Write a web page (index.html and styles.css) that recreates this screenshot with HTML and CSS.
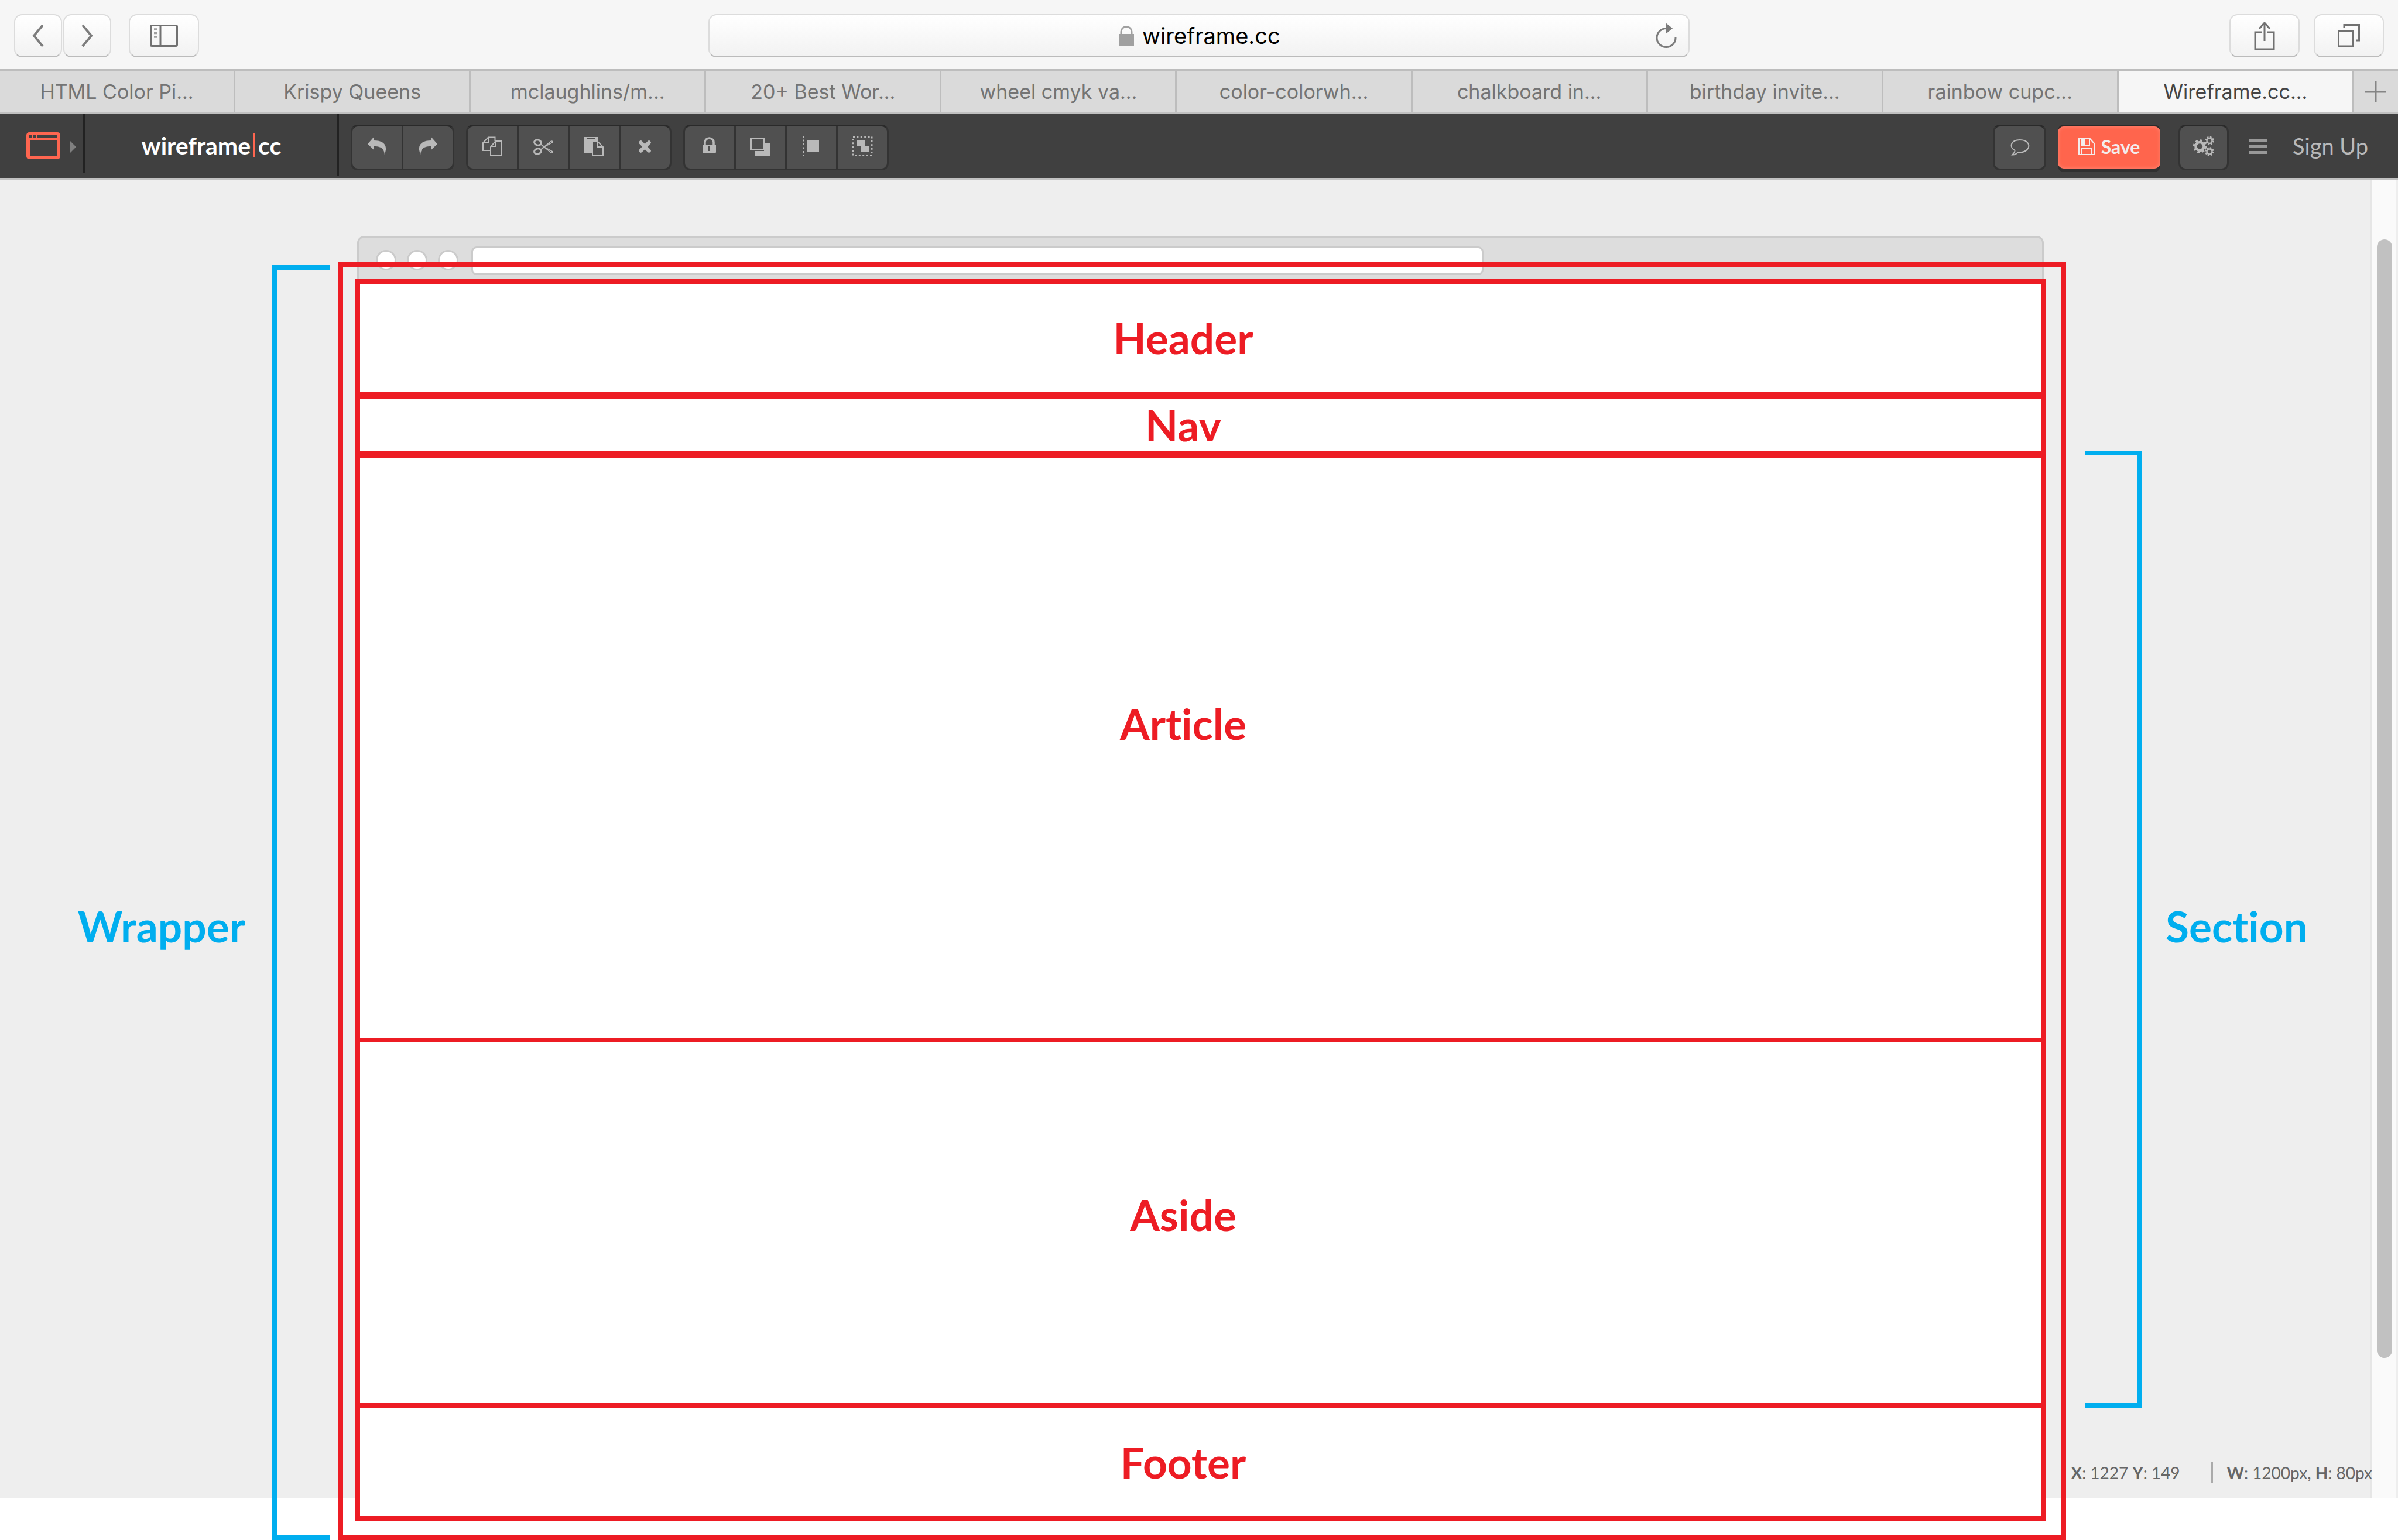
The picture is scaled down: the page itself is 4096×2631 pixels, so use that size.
FILE: index.html
```html
<!DOCTYPE html>
<html lang="en">
<head>
<meta charset="utf-8">
<title>Wireframe.cc</title>
<link rel="stylesheet" href="styles.css">
</head>
<body>
<svg class="sprite" aria-hidden="true">
  <symbol id="undo" viewBox="0 0 36 36"><path fill="currentColor" d="M2 14 12.500 2V8C26 8 34 13 33 24L31 33C30 22 26 18 12.500 18V24Z"/></symbol>
</svg>

<header class="browser">
  <div class="history">
    <button class="chip chip-narrow" aria-label="Back"><svg width="20" height="40" viewBox="0 0 20 40"><path d="M18 2 3 20 18 38" fill="none" stroke="#7d7d7d" stroke-width="4"/></svg></button>
    <button class="chip chip-narrow" aria-label="Forward"><svg width="20" height="40" viewBox="0 0 20 40"><path d="M2 2 17 20 2 38" fill="none" stroke="#7d7d7d" stroke-width="4"/></svg></button>
    <button class="chip chip-wide" aria-label="Sidebar"><svg width="48" height="38" viewBox="0 0 48 38"><rect x="1.500" y="1.500" width="45" height="35" rx="2" fill="none" stroke="#717171" stroke-width="3"/><path d="M18 1V37" stroke="#717171" stroke-width="3"/><path d="M7 8h6M7 14.500h6M7 21h6" stroke="#a0a0a0" stroke-width="3.500"/></svg></button>
  </div>
  <div class="address">
    <div class="address-main">
      <svg width="26" height="34" viewBox="0 0 26 34"><path d="M4 15V10a9 8.500 0 0 1 18 0V15" fill="none" stroke="#a0a0a0" stroke-width="3"/><rect y="14" width="26" height="20" fill="#a0a0a0"/></svg>
      <input class="address-input" type="text" value="wireframe.cc" aria-label="Address">
    </div>
    <button class="reload" aria-label="Reload"><svg width="36" height="44" viewBox="0 0 36 44"><path d="M19 9.500A16 16 0 1 0 34 25" fill="none" stroke="#7c7c7c" stroke-width="3"/><path d="M17 0 29 9.500 17 19Z" fill="#7c7c7c"/></svg></button>
  </div>
  <div class="window-actions">
    <button class="chip chip-wide" aria-label="Share"><svg width="36" height="50" viewBox="0 0 36 50"><path d="M13 19H2V48H34V19H23M18 34V3M9 13 18 3 27 13" fill="none" stroke="#717171" stroke-width="3"/></svg></button>
    <button class="chip chip-wide" aria-label="Show all tabs"><svg width="38" height="40" viewBox="0 0 38 40"><path d="M1.500 12H26.500V38H1.500ZM11 7V1.500H36.500V28H31" fill="none" stroke="#717171" stroke-width="3"/></svg></button>
  </div>
</header>

<nav class="tabs" aria-label="Tabs">
  <a class="tab" href="#">HTML Color Pi...</a>
  <a class="tab" href="#">Krispy Queens</a>
  <a class="tab" href="#">mclaughlins/m...</a>
  <a class="tab" href="#">20+ Best Wor...</a>
  <a class="tab" href="#">wheel cmyk va...</a>
  <a class="tab" href="#">color-colorwh...</a>
  <a class="tab" href="#">chalkboard in...</a>
  <a class="tab" href="#">birthday invite...</a>
  <a class="tab" href="#">rainbow cupc...</a>
  <a class="tab tab-active" href="#">Wireframe.cc...</a>
  <button class="tab-new" aria-label="New tab"><svg width="36" height="36" viewBox="0 0 36 36"><path d="M18 0V36M0 18H36" stroke="#858585" stroke-width="3"/></svg></button>
</nav>

<div class="toolbar">
  <button class="stencil" aria-label="Choose stencil">
    <svg width="58" height="46" viewBox="0 0 58 46"><rect width="58" height="46" rx="5" fill="#ff6650"/><path d="M6 14H52V40H6ZM5 5h5v4H5ZM12 5h4v4h-4ZM18 5H53V9H18Z" fill="#404040"/></svg>
    <svg width="10" height="20" viewBox="0 0 10 20"><path d="M0 0 10 10 0 20Z" fill="#808080"/></svg>
  </button>
  <a class="brand" href="#">wireframe<span class="brand-bar"></span>cc</a>
  <div class="tools">
    <div class="group">
      <button class="tool" aria-label="Undo"><svg class="icon"><use href="#undo"/></svg></button>
      <button class="tool" aria-label="Redo"><svg class="icon icon-flip"><use href="#undo"/></svg></button>
    </div>
    <div class="group">
      <button class="tool" aria-label="Copy"><svg class="icon" viewBox="0 0 36 36" fill="none" stroke="currentColor" stroke-width="2"><path d="M14 25H2V12L11 2.500H22.500V9M2 12H11V2.500M15 19 23.500 9H34V33H15ZM15 18H23.500V9"/></svg></button>
      <button class="tool" aria-label="Cut"><svg class="icon" viewBox="0 0 36 36" fill="none" stroke="currentColor"><ellipse cx="8.500" cy="11.500" rx="6" ry="4.500" stroke-width="3" transform="rotate(15 8.500 11.500)"/><ellipse cx="8.500" cy="26.500" rx="6" ry="4.500" stroke-width="3" transform="rotate(-15 8.500 26.500)"/><path stroke-width="1.500" d="M14 15 31 28.500Q34 30 34 27L16 17M14 23 31 9.500Q34 8 34 11L16 21M14 14 20 19 14 24"/></svg></button>
      <button class="tool" aria-label="Paste"><svg class="icon" viewBox="0 0 36 36"><path fill="currentColor" d="M1 2H24V10H15V29H1Z"/><path d="M5.500 5H20" stroke="#505050" stroke-width="2"/><path fill="#505050" stroke="currentColor" stroke-width="2" d="M15 10H24L33 19V33H15ZM24 10V19H33"/></svg></button>
      <button class="tool" aria-label="Delete"><svg class="icon" viewBox="0 0 36 36"><path d="M10.500 11.500 24.500 25.500M24.500 11.500 10.500 25.500" stroke="currentColor" stroke-width="6.500" stroke-linecap="round"/></svg></button>
    </div>
    <div class="group">
      <button class="tool" aria-label="Lock"><svg class="icon" viewBox="0 0 36 36"><path d="M10 16V11a7.500 7 0 0 1 15 0V16" fill="none" stroke="currentColor" stroke-width="3.500"/><rect x="6" y="15" width="23" height="14" rx="1" fill="currentColor"/><path d="M17.500 18V26" stroke="#505050" stroke-width="3"/></svg></button>
      <button class="tool" aria-label="Bring to front"><svg class="icon" viewBox="0 0 36 36"><path d="M24 13H34V35H9V26H24Z" fill="currentColor"/><rect x="1.500" y="4.500" width="22" height="19" fill="none" stroke="currentColor" stroke-width="3"/></svg></button>
      <button class="tool" aria-label="Align"><svg class="icon" viewBox="0 0 36 36"><path d="M4.500 0V35" stroke="currentColor" stroke-width="3" stroke-dasharray="3 3.500"/><rect x="10" y="8" width="21" height="19" fill="currentColor"/></svg></button>
      <button class="tool" aria-label="Group"><svg class="icon" viewBox="0 0 36 36"><rect x="2" y="1.500" width="32" height="32" fill="none" stroke="currentColor" stroke-width="3" stroke-dasharray="3 3.400"/><path d="M9 8H23V17H29V27H16V18H9Z" fill="currentColor"/></svg></button>
    </div>
  </div>
  <div class="account">
    <button class="tool tool-single" aria-label="Comments"><svg class="icon" viewBox="0 0 36 36"><path d="M9.500 25C-1 19 3 7 18 7S36 17 31 23C27 28 20 28.500 15 28 12 31 8 33 5 32.500 8 30 9.500 28 9.500 25Z" fill="none" stroke="currentColor" stroke-width="2"/></svg></button>
    <button class="save"><svg width="28" height="29" viewBox="0 0 28 29"><path d="M1 1H20L27 9V28H1ZM5 28V18H23V28M5 1V12H19V1" fill="none" stroke="#f3ecec" stroke-width="2"/><path d="M5 2H11V11H5Z" fill="#f3ecec"/></svg>Save</button>
    <button class="tool tool-single tool-settings" aria-label="Settings"><svg class="icon" viewBox="0 0 36 36" fill="none" stroke="currentColor"><circle cx="11.500" cy="18" r="7" stroke-width="4.500"/><circle cx="11.500" cy="18" r="10" stroke-width="3.500" stroke-dasharray="4 3.850"/><circle cx="28" cy="8.500" r="4.500" stroke-width="2.500"/><circle cx="28" cy="8.500" r="6.500" stroke-width="2.500" stroke-dasharray="2.800 2.300"/><circle cx="28" cy="27" r="4.500" stroke-width="2.500"/><circle cx="28" cy="27" r="6.500" stroke-width="2.500" stroke-dasharray="2.800 2.300"/></svg></button>
    <button class="menu" aria-label="Menu"><svg width="31" height="28" viewBox="0 0 31 28"><path d="M0 3.500H31M0 14H31M0 24.500H31" stroke="#989898" stroke-width="5"/></svg></button>
    <a class="signup" href="#">Sign Up</a>
  </div>
</div>

<main class="workspace">
  <div class="backdrop"></div>
  <div class="scrollbar"><div class="thumb"></div></div>
  <div class="mock-browser">
    <span class="dot"></span><span class="dot"></span><span class="dot"></span>
    <div class="mock-address"></div>
  </div>
  <div class="label label-wrapper">Wrapper</div>
  <div class="bracket bracket-wrapper"></div>
  <div class="frame">
    <section class="box box-header">Header</section>
    <section class="box box-nav">Nav</section>
    <section class="box box-article">Article</section>
    <section class="box box-aside">Aside</section>
    <section class="box box-footer">Footer</section>
  </div>
  <div class="bracket bracket-section"></div>
  <div class="label label-section">Section</div>
  <div class="status">
    <span><b>X</b>: 1227 <b>Y</b>: 149</span>
    <span class="status-rule"></span>
    <span><b>W</b>: 1200px, <b>H</b>: 80px</span>
  </div>
</main>
</body>
</html>
```
FILE: styles.css
```css
* { box-sizing: border-box; }

body {
  margin: 0;
  min-height: 100vh;
  display: flex;
  flex-direction: column;
  background: #fff;
  font-family: Lato, sans-serif;
}

button {
  margin: 0;
  padding: 0;
  border: 0;
  background: none;
  font: inherit;
  color: inherit;
}

a { color: inherit; text-decoration: none; }
svg { display: block; flex: none; }
.sprite { position: absolute; width: 0; height: 0; }

/* Browser bar */
.browser {
  display: grid;
  grid-template-columns: 1fr 1676px 1fr;
  align-items: center;
  height: 121px;
  padding: 4px 24px 0;
  border-bottom: 3px solid #bdbdbd;
  background: #f6f6f6;
}

.history { display: flex; gap: 2px; }
.history .chip-wide { margin-left: 28px; }
.window-actions { display: flex; justify-content: flex-end; gap: 24px; }

.chip,
.address {
  height: 74px;
  border: 2px solid #dcdcdc;
  border-bottom-color: #bbb;
  border-radius: 14px;
  background: linear-gradient(#fff, #f2f2f2);
}

.chip { display: flex; align-items: center; justify-content: center; }
.chip-narrow { width: 82px; }
.chip-wide { width: 120px; }

.address { display: flex; align-items: center; }
.address-main {
  flex: 1;
  display: flex;
  align-items: center;
  justify-content: center;
  gap: 14px;
  padding-left: 62px;
}
.address-input {
  width: 240px;
  padding: 0;
  border: 0;
  background: none;
  font: 38px/48px Inter, sans-serif;
  color: #000;
}
.reload { margin-right: 20px; }

/* Tabs */
.tabs {
  display: flex;
  height: 74px;
  border-bottom: 3px solid #c1c1c1;
  background: #dadada;
  font: 34px/72px Inter, sans-serif;
  color: #747474;
}
.tab {
  flex: 1;
  border-right: 3px solid #bdbdbd;
  text-align: center;
  white-space: nowrap;
}
.tab-active { background: #f6f6f6; color: #444; }
.tab-new {
  width: 75px;
  display: flex;
  align-items: center;
  justify-content: center;
}

/* Editor toolbar */
.toolbar {
  display: flex;
  align-items: flex-start;
  height: 112px;
  border-bottom: 3px solid #c1c1c1;
  background: #404040;
  color: #b9b9b9;
  font-size: 38px;
}
.stencil {
  display: flex;
  align-items: center;
  gap: 17px;
  width: 146px;
  height: 100px;
  padding-left: 45px;
  padding-top: 8px;
  border-right: 5px solid #222;
}
.stencil svg:last-child { margin-top: 4px; }
.brand {
  display: flex;
  align-items: center;
  justify-content: center;
  width: 433px;
  height: 106px;
  border-right: 3px solid #222;
  font-size: 41px;
  font-weight: 700;
  color: #fff;
}
.brand-bar {
  width: 3px;
  height: 40px;
  margin: 0 5px;
  background: #ff6650;
}

.tools {
  flex: 1;
  display: flex;
  gap: 20px;
  padding: 18px 20px;
}
.group,
.tool-single {
  height: 78px;
  border: 3px solid #333;
  border-top-color: #2a2a2a;
  border-radius: 12px;
  background: #505050;
}
.group { display: flex; }
.tool {
  display: flex;
  align-items: center;
  justify-content: center;
  width: 84px;
  padding-bottom: 4px;
  color: #b9b9b9;
}
.tool + .tool { width: 87px; border-left: 3px solid #333; }
.icon { width: 36px; height: 36px; }
.icon-flip { transform: scaleX(-1); }

.account {
  display: flex;
  align-items: center;
  padding: 18px 51px 0 0;
}
.tool-single { width: 91px; }
.save {
  display: flex;
  align-items: center;
  justify-content: center;
  gap: 11px;
  width: 175px;
  height: 72px;
  margin: 0 31px 0 20px;
  padding-bottom: 3px;
  border-radius: 10px;
  background: #ff654d;
  box-shadow: inset 0 0 6px #ff8a78, 0 -3px #2a2a2a, 0 6px #303030;
  font-size: 32px;
  font-weight: 700;
  color: #f3ecec;
}
.tool-settings { width: 86px; }
.menu { margin: 0 43px 0 35px; padding-bottom: 4px; }
.signup { padding-bottom: 6px; }

/* Canvas with its annotations */
.workspace {
  flex: 1;
  display: grid;
  grid-template-columns: 465px 98px 15px minmax(0, 1fr) 32px 97px 391px 47px;
  grid-template-rows: 141px minmax(0, 1fr) 71px;
}
.backdrop { grid-area: 1 / 1 / 3 / 9; background: #eee; }
.scrollbar {
  grid-area: 1 / 8 / 3 / 9;
  padding: 102px 7px 240px 9px;
  border-left: 2px solid #e6e6e6;
  border-right: 3px solid #eee;
  background: #fafafa;
}
.thumb { height: 100%; border-radius: 13px; background: #c1c1c1; }

.mock-browser {
  grid-area: 1 / 4 / 3 / 5;
  display: flex;
  align-items: flex-start;
  gap: 18px;
  height: 80px;
  margin: 96px 38px 0 32px;
  padding: 15px 0 0 29px;
  border: 3px solid #cbcbcb;
  border-bottom: 0;
  border-radius: 12px 12px 0 0;
  background: #ddd;
}
.dot {
  width: 35px;
  height: 35px;
  margin-top: 6px;
  border: 3px solid #cbcbcb;
  border-radius: 50%;
  background: #fff;
}
.mock-address {
  width: calc(60% + 21px);
  height: 49px;
  margin-left: 4px;
  border: 3px solid #cbcbcb;
  border-radius: 9px;
  background: #fff;
}

.frame {
  grid-area: 2 / 4 / 4 / 5;
  display: grid;
  grid-template-rows: 205px 101px 998fr 624fr 193px;
  padding: 21px 26px 25px 21px;
  border: 8px solid #ed1c24;
}
.box,
.label {
  display: flex;
  align-items: center;
  font-size: 73px;
  line-height: 84px;
  font-weight: 700;
  font-variant-ligatures: none;
}
.box {
  justify-content: center;
  padding-right: 60px;
  border: 8px solid #ed1c24;
  border-top: 0;
  background: #fff;
  color: #ed1c24;
}
.box-header { border-top: 8px solid #ed1c24; }
.box-header,
.box-nav { border-bottom-width: 13px; }
.box-article { padding-bottom: 84px; }
.box-aside { padding-bottom: 28px; }

.bracket { border: 8px solid #00aeef; }
.bracket-wrapper {
  grid-area: 2 / 2 / 4 / 3;
  margin-top: 5px;
  border-right: 0;
}
.bracket-section {
  grid-area: 2 / 6 / 3 / 7;
  margin: 322px 0 155px;
  border-left: 0;
}
.label {
  margin: 322px 0 155px;
  padding-bottom: 12px;
  color: #00aeef;
}
.label-wrapper { grid-area: 2 / 1; justify-content: flex-end; padding-right: 46px; }
.label-section { grid-area: 2 / 7; padding-left: 41px; }

.status {
  grid-area: 2 / 5 / 3 / 9;
  display: flex;
  align-items: center;
  justify-content: flex-end;
  align-self: end;
  padding: 0 44px 22px 0;
  font-size: 28px;
  line-height: 44px;
  white-space: nowrap;
  color: #666;
}
.status-rule {
  flex: none;
  width: 4px;
  height: 36px;
  margin: 0 24px 0 52px;
  background: #aaa;
}
```
